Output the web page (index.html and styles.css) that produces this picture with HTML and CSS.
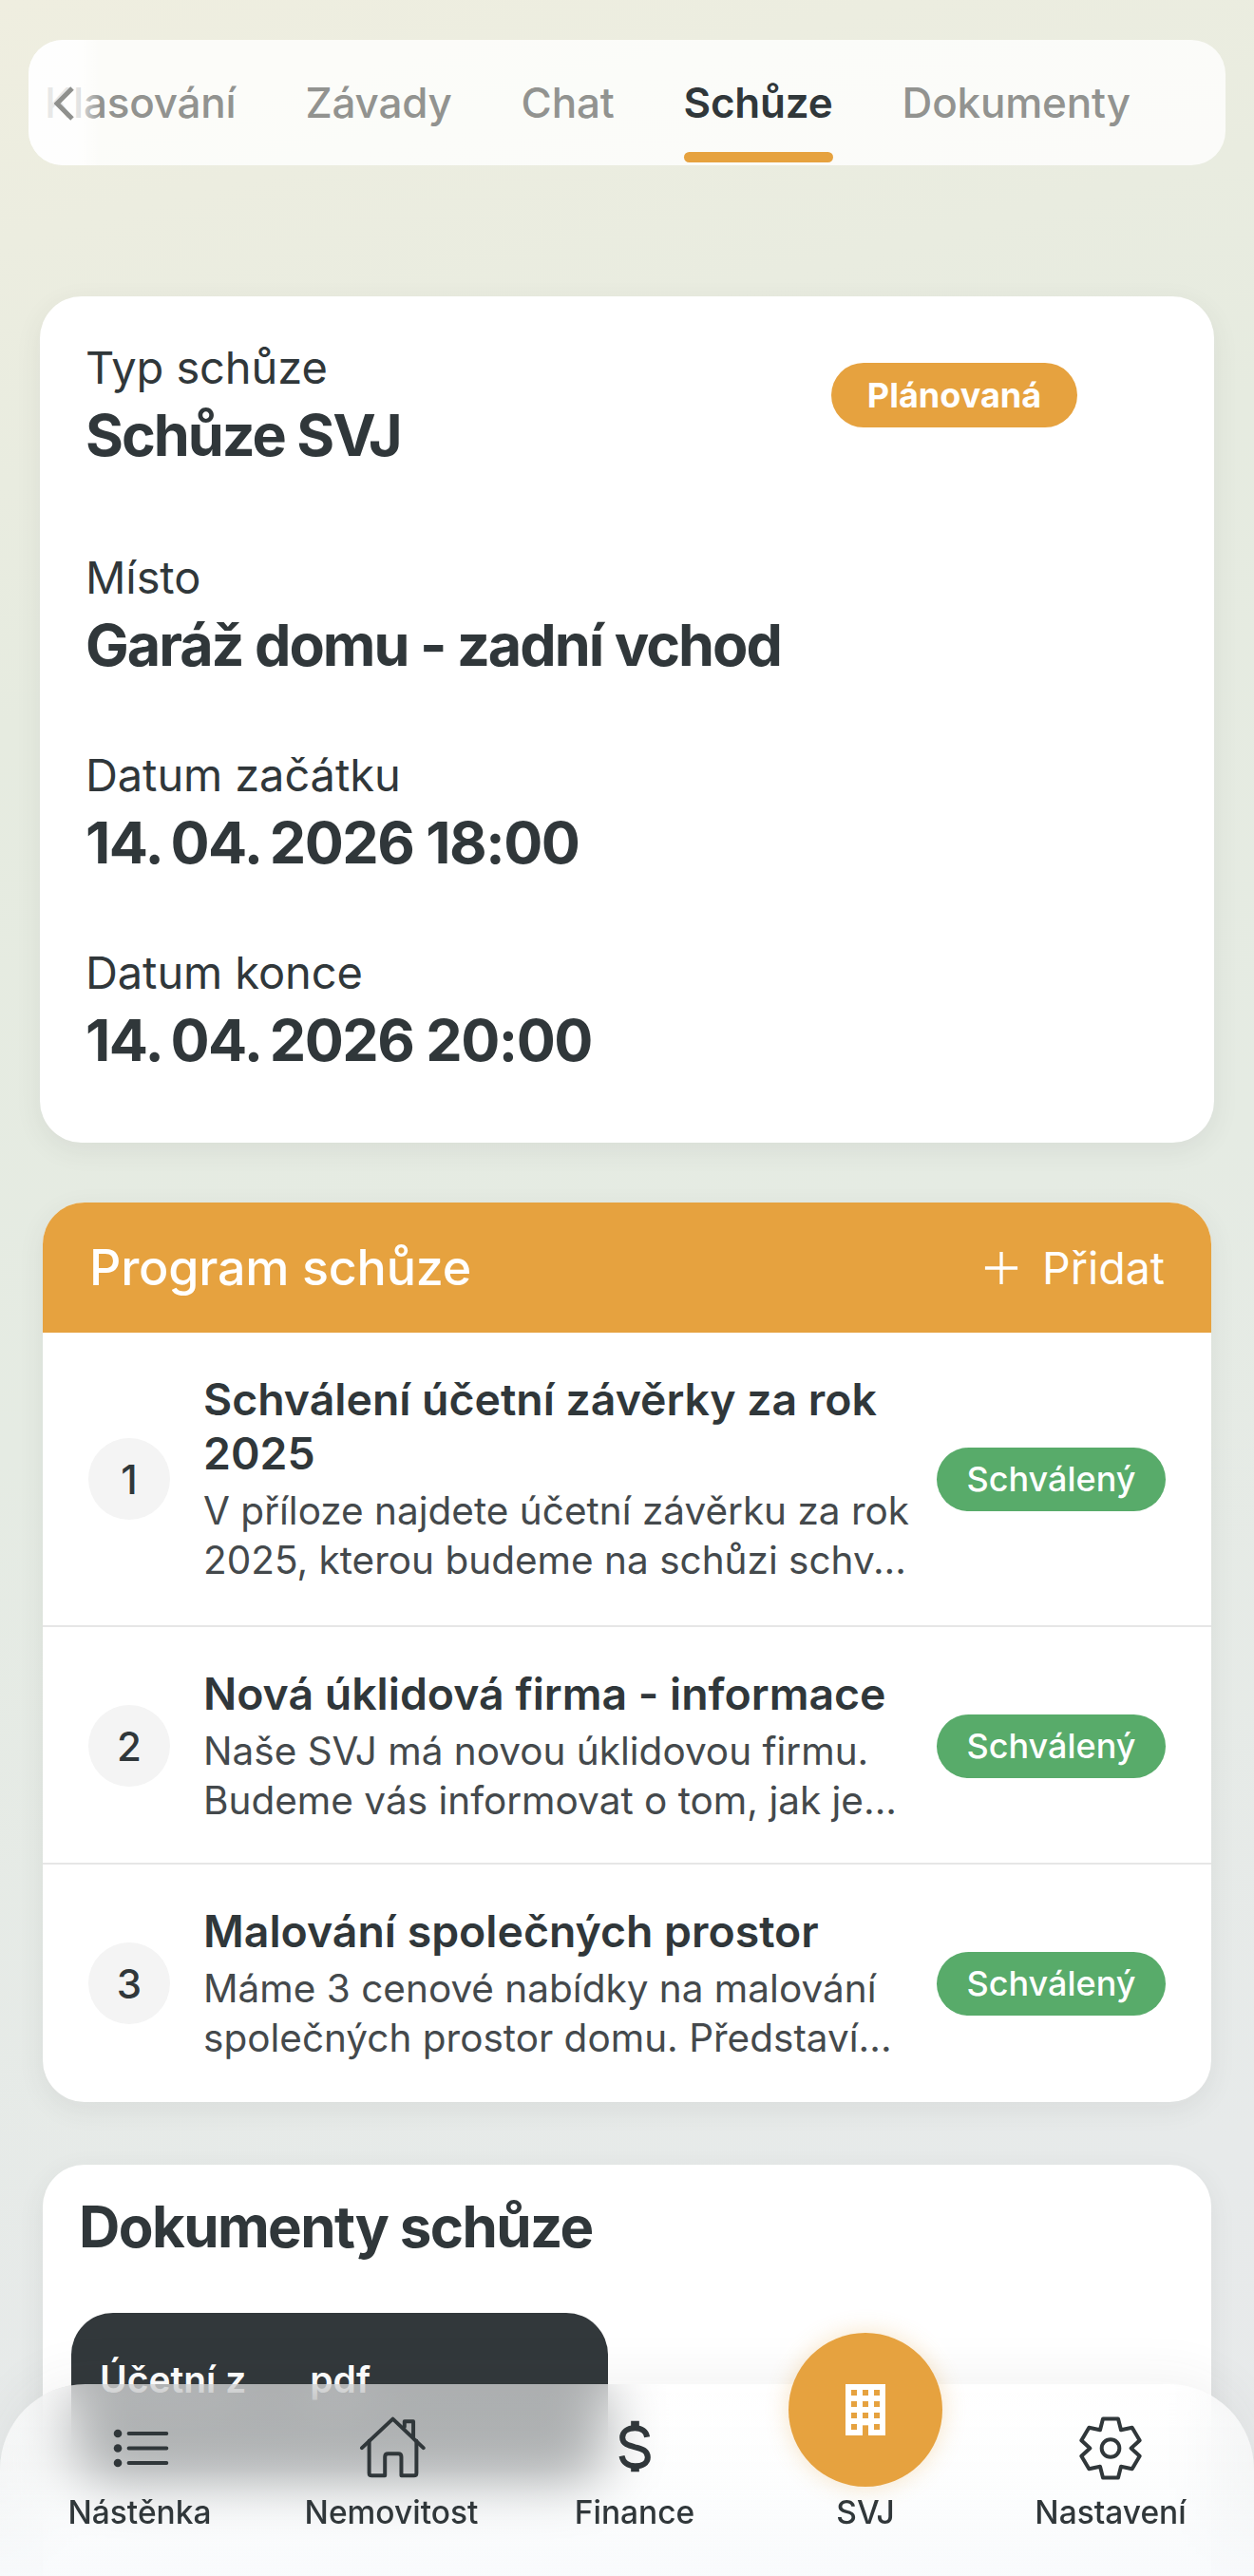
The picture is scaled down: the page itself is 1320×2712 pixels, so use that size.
FILE: index.html
```html
<!DOCTYPE html>
<html lang="cs">
<head>
  <meta charset="UTF-8">
  <title>Schůze</title>
  <link rel="stylesheet" href="styles.css">
</head>
<body>
  <div class="screen">
    <div class="tabs">
      <div class="tab-list">
        <div class="tab">Klasování</div>
        <div class="tab">Závady</div>
        <div class="tab">Chat</div>
        <div class="tab active">Schůze</div>
        <div class="tab">Dokumenty</div>
      </div>
      <div class="tab-fade"></div>
      <svg class="tab-back" viewBox="0 0 22 36"><path d="M19 2 L3 18 L19 34" fill="none" stroke="#8f908d" stroke-width="5"/></svg>
    </div>

    <div class="card info-card">
      <span class="badge badge-planned">Plánovaná</span>
      <div class="info-row first">
        <div class="info-label">Typ schůze</div>
        <div class="info-value">Schůze SVJ</div>
      </div>
      <div class="info-row second">
        <div class="info-label">Místo</div>
        <div class="info-value">Garáž domu - zadní vchod</div>
      </div>
      <div class="info-row">
        <div class="info-label">Datum začátku</div>
        <div class="info-value info-date">14.&thinsp;04.&thinsp;2026 18:00</div>
      </div>
      <div class="info-row">
        <div class="info-label">Datum konce</div>
        <div class="info-value info-date">14.&thinsp;04.&thinsp;2026 20:00</div>
      </div>
    </div>

    <div class="card program-card">
      <div class="program-head">
        <span class="program-title">Program schůze</span>
        <span class="program-add">
          <svg class="plus" viewBox="0 0 40 40"><path d="M20 2 V38 M2 20 H38" stroke="#fff" stroke-width="3.5" fill="none"/></svg>
          Přidat
        </span>
      </div>
      <div class="program-row">
        <div class="num">1</div>
        <div class="program-text">
          <div class="item-title">Schválení účetní závěrky za rok 2025</div>
          <div class="item-desc">V příloze najdete účetní závěrku za rok<br>2025, kterou budeme na schůzi schv...</div>
        </div>
        <span class="badge badge-ok">Schválený</span>
      </div>
      <div class="program-row">
        <div class="num">2</div>
        <div class="program-text">
          <div class="item-title">Nová úklidová firma - informace</div>
          <div class="item-desc">Naše SVJ má novou úklidovou firmu.<br>Budeme vás informovat o tom, jak je...</div>
        </div>
        <span class="badge badge-ok">Schválený</span>
      </div>
      <div class="program-row">
        <div class="num">3</div>
        <div class="program-text">
          <div class="item-title">Malování společných prostor</div>
          <div class="item-desc">Máme 3 cenové nabídky na malování<br>společných prostor domu. Představí...</div>
        </div>
        <span class="badge badge-ok">Schválený</span>
      </div>
    </div>

    <div class="card docs-card">
      <h2 class="docs-title">Dokumenty schůze</h2>
      <div class="doc-chip"><span>Účetní z</span><span>pdf</span></div>
    </div>
  </div>

  <nav class="bottom-nav">
    <div class="nav-item nav-home">
      <svg class="nav-icon icon-list" viewBox="170 225 185 130">
        <circle cx="190" cy="243" r="13" fill="#30373a"/>
        <circle cx="190" cy="290" r="13" fill="#30373a"/>
        <circle cx="190" cy="337" r="13" fill="#30373a"/>
        <path d="M225 243 H345 M225 290 H345 M225 337 H345" stroke="#30373a" stroke-width="12" stroke-linecap="round" fill="none"/>
      </svg>
      <span>Nástěnka</span>
    </div>
    <div class="nav-item nav-prop">
      <svg class="nav-icon icon-house" viewBox="950 190 220 200" fill="none" stroke="#30373a" stroke-width="12" stroke-linecap="round" stroke-linejoin="round">
        <path d="M962 292 L1060 200 L1157 292"/>
        <path d="M985 270 V372 Q985 380 993 380 H1035 V320 Q1035 310 1045 310 H1077 Q1087 310 1087 320 V380 H1127 Q1135 380 1135 372 V270"/>
        <path d="M1097 225 V208 H1125 V258"/>
      </svg>
      <span>Nemovitost</span>
    </div>
    <div class="nav-item nav-fin">
      <svg class="nav-icon icon-dollar" viewBox="150 325 110 165" fill="none" stroke="#30373a">
        <path d="M243 378 C240 360 225 350 205 350 C180 350 165 362 165 380 C165 400 185 405 205 410 C228 415 245 422 245 442 C245 460 228 470 205 470 C182 470 167 458 163 438" stroke-width="18"/>
        <path d="M205 327 V350 M205 470 V488" stroke-width="26"/>
      </svg>
      <span>Finance</span>
    </div>
    <div class="nav-item nav-svj">
      <span>SVJ</span>
    </div>
    <div class="nav-item nav-set">
      <svg class="nav-icon icon-gear" viewBox="405 187 204 206" fill="none" stroke="#30373a" stroke-width="12" stroke-linejoin="round">
        <path d="M483 197 L531 197 L540 232 L575 225 L599 265 L572 290 L599 315 L575 355 L540 348 L531 383 L483 383 L474 348 L439 355 L415 315 L442 290 L415 265 L439 225 L474 232 Z"/>
        <circle cx="507" cy="290" r="28"/>
      </svg>
      <span>Nastavení</span>
    </div>
    <div class="fab">
      <svg class="fab-icon" viewBox="870 210 126 162">
        <rect x="870" y="210" width="126" height="162" fill="#fff"/>
        <g fill="#e6a23f">
          <rect x="888" y="228" width="18" height="18"/><rect x="924" y="228" width="18" height="18"/><rect x="960" y="228" width="18" height="18"/>
          <rect x="888" y="264" width="18" height="18"/><rect x="924" y="264" width="18" height="18"/><rect x="960" y="264" width="18" height="18"/>
          <rect x="888" y="300" width="18" height="18"/><rect x="924" y="300" width="18" height="18"/><rect x="960" y="300" width="18" height="18"/>
          <rect x="888" y="336" width="18" height="18"/><rect x="924" y="340" width="18" height="32"/><rect x="960" y="336" width="18" height="18"/>
        </g>
      </svg>
    </div>
  </nav>
</body>
</html>
```

FILE: styles.css
```css
* {
  box-sizing: border-box;
}
html, body {
  margin: 0;
  height: 2712px;
  overflow: hidden;
}
body {
  position: relative;
  font-family: Inter, "Noto Sans", sans-serif;
  color: #30373a;
  background: linear-gradient(165deg, #efeee0 0%, #e6ebe0 25%, #e5ebe3 50%, #e7eaea 85%, #e8eaeb 100%);
}
.screen {
  padding-top: 42px;
}

/* tabs */
.tabs {
  position: relative;
  margin: 0 30px;
  height: 132px;
  border-radius: 36px;
  background-color: rgba(255, 255, 255, 0.8);
  overflow: hidden;
}
.tab-list {
  display: flex;
  gap: 73px;
  padding-left: 17px;
  white-space: nowrap;
}
.tab {
  padding-top: 39px;
  font-size: 44px;
  line-height: 54px;
  letter-spacing: -0.2px;
  color: #929390;
  font-weight: 500;
}
.tab::after {
  content: "";
  display: block;
  height: 11px;
  margin-top: 25px;
  border-radius: 6px;
}
.tab.active {
  color: #30373a;
  font-weight: 600;
}
.tab.active::after {
  background-color: #e6a23f;
}
.tab-fade {
  position: absolute;
  left: 0;
  top: 0;
  bottom: 0;
  width: 76px;
  background: linear-gradient(90deg, rgba(255,255,255,0.82) 0%, rgba(255,255,255,0.75) 70%, rgba(255,255,255,0) 100%);
}
.tab-back {
  position: absolute;
  left: 27px;
  top: 49px;
  width: 22px;
  height: 36px;
}

/* cards */
.card {
  background-color: #fff;
  border-radius: 44px;
  box-shadow: 0 8px 28px rgba(60, 70, 70, 0.08);
}
.info-card {
  position: relative;
  margin: 138px 42px 0;
  height: 891px;
  padding: 44px 48px 0;
}
.info-row {
  margin-top: 66px;
}
.info-row.first {
  margin-top: 0;
}
.info-row.second {
  margin-top: 79px;
}
.info-label {
  font-size: 47px;
  line-height: 62px;
  letter-spacing: -0.1px;
}
.info-value {
  font-size: 61px;
  line-height: 80px;
  font-weight: 700;
  letter-spacing: -2px;
}
.info-date {
  letter-spacing: -1.5px;
}
.badge {
  display: flex;
  align-items: center;
  justify-content: center;
  flex: none;
  color: #fff;
  border-radius: 40px;
}
.badge-planned {
  position: absolute;
  left: 833px;
  top: 70px;
  width: 259px;
  height: 68px;
  background-color: #e6a23f;
  font-size: 36px;
  font-weight: 700;
}

/* program */
.program-card {
  margin: 63px 45px 0;
  height: 947px;
  overflow: hidden;
}
.program-head {
  display: flex;
  align-items: center;
  justify-content: space-between;
  height: 137px;
  padding: 0 49px;
  background-color: #e6a23f;
  color: #fff;
}
.program-title {
  font-size: 52px;
  font-weight: 500;
  letter-spacing: -0.2px;
}
.program-add {
  display: flex;
  align-items: center;
  gap: 24px;
  font-size: 46.5px;
}
.plus {
  width: 38px;
  height: 38px;
}
.program-row {
  display: flex;
  align-items: center;
  height: 250px;
  padding: 2px 48px 0;
  border-top: 2px solid #e6e6e6;
}
.program-head + .program-row {
  height: 308px;
  padding-top: 0;
  border-top: 0;
}
.num {
  display: flex;
  align-items: center;
  justify-content: center;
  flex: none;
  width: 86px;
  height: 86px;
  border-radius: 50%;
  background-color: #f4f4f4;
  font-size: 42px;
  font-weight: 500;
}
.program-text {
  flex: 1;
  min-width: 0;
  padding: 0 20px 0 35px;
}
.item-title {
  font-size: 46.4px;
  line-height: 57px;
  font-weight: 600;
}
.item-desc {
  margin-top: 6px;
  font-size: 40.5px;
  line-height: 52px;
  color: #44494c;
  white-space: nowrap;
}
.badge-ok {
  width: 241px;
  height: 67px;
  background-color: #58ab6a;
  font-size: 36px;
  font-weight: 500;
}

/* documents */
.docs-card {
  margin: 66px 45px 0;
  height: 600px;
  padding: 30px 30px 0;
}
.docs-title {
  margin: 0 0 56px 8px;
  font-size: 60px;
  line-height: 70px;
  font-weight: 700;
  letter-spacing: -1.6px;
}
.doc-chip {
  display: flex;
  gap: 67px;
  width: 565px;
  height: 184px;
  padding: 46px 30px 0;
  border-radius: 44px;
  background-color: #32383b;
  color: #fff;
  font-size: 39px;
  font-weight: 600;
}

/* bottom navigation */
.bottom-nav {
  position: absolute;
  left: 0;
  right: 0;
  bottom: 0;
  height: 202px;
  border-radius: 90px 90px 0 0;
  background: linear-gradient(180deg, rgba(255,255,255,0.6) 0%, rgba(252,253,253,0.62) 45%, rgba(248,250,252,0.92) 100%);
  backdrop-filter: blur(30px);
  box-shadow: 0 -14px 50px rgba(60, 60, 60, 0.05);
}
.nav-item {
  position: absolute;
  top: 0;
  bottom: 0;
  width: 240px;
  display: flex;
  flex-direction: column;
  align-items: center;
  justify-content: flex-end;
  padding-bottom: 47px;
  font-size: 33.5px;
  line-height: 40px;
  font-weight: 500;
}
.nav-home { left: 27px; }
.nav-prop { left: 292px; }
.nav-fin { left: 548px; }
.nav-svj { left: 791px; }
.nav-set { left: 1049px; }
.nav-icon {
  position: absolute;
}
.icon-list {
  top: 46px;
  left: 90px;
  width: 62px;
  height: 43px;
}
.icon-house {
  top: 33px;
  left: 85px;
  width: 73px;
  height: 67px;
}
.icon-dollar {
  top: 38px;
  left: 102px;
  width: 37px;
  height: 55px;
}
.icon-gear {
  top: 33px;
  left: 86px;
  width: 68px;
  height: 69px;
}
.fab {
  position: absolute;
  left: 830px;
  top: -54px;
  width: 162px;
  height: 162px;
  display: flex;
  align-items: center;
  justify-content: center;
  border-radius: 50%;
  background-color: #e6a23f;
  box-shadow: 0 0 24px rgba(230, 162, 63, 0.3);
}
.fab-icon {
  width: 42px;
  height: 54px;
}
```
